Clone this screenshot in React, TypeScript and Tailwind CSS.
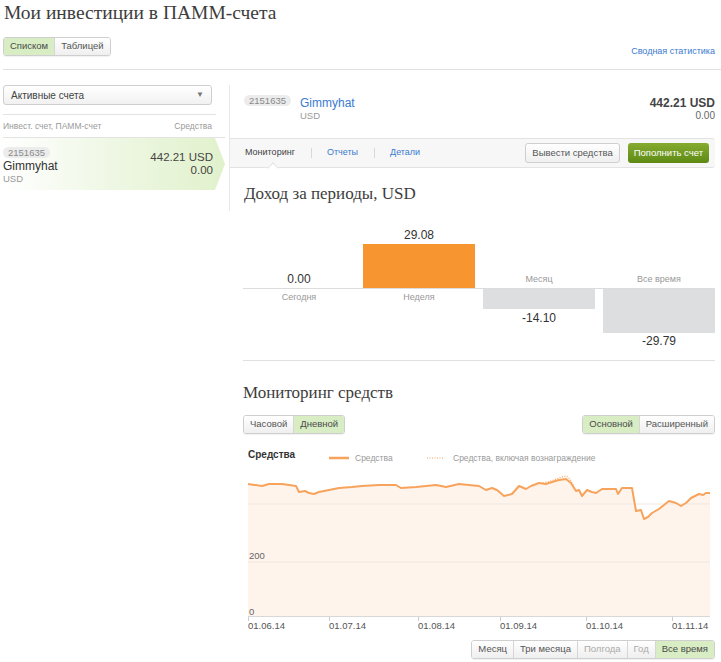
import React from "react";

const sans = { fontFamily: '"Liberation Sans", Arial, sans-serif' };
const serif = { fontFamily: '"Liberation Serif", "Times New Roman", serif' };

const line: [number, number][] = [
  [5, 43], [19, 45], [26, 43], [39, 43], [46, 44], [53, 45], [56, 51], [62, 50],
  [66, 52], [71, 53], [76, 51], [86, 49], [96, 47], [109, 46], [119, 45], [136, 44],
  [153, 44], [158, 47], [173, 46], [193, 44], [203, 46], [216, 43], [236, 45],
  [243, 49], [249, 47], [254, 49], [261, 55], [269, 53], [276, 45], [283, 48],
  [288, 45], [296, 42], [303, 43], [309, 41], [316, 39], [323, 38], [328, 42],
  [333, 50], [336, 49], [339, 55], [344, 49], [349, 51], [353, 52], [359, 48],
  [373, 48], [375, 53], [379, 47], [389, 47], [393, 70], [398, 69], [401, 78],
  [405, 76], [409, 72], [416, 68], [426, 60], [433, 62], [438, 65], [443, 62],
  [448, 57], [456, 53], [460, 54], [463, 52], [467, 52],
];

const dotted: [number, number][] = [
  [300, 42], [304, 41], [311, 39], [318, 36], [323, 35], [327, 38], [330, 44],
];

const xLabels = [
  { x: 5, t: "01.06.14" },
  { x: 86, t: "01.07.14" },
  { x: 175, t: "01.08.14" },
  { x: 257, t: "01.09.14" },
  { x: 343, t: "01.10.14" },
  { x: 429, t: "01.11.14" },
];

function Seg({
  items,
}: {
  items: { label: string; active?: boolean; disabled?: boolean }[];
}) {
  return (
    <div className="inline-flex rounded-[3px] border border-[#cfcfcf] shadow-[0_1px_1px_rgba(0,0,0,0.06)] overflow-hidden">
      {items.map((it, i) => (
        <div
          key={it.label}
          className={`px-[6px] h-[17px] flex items-center text-[9.5px] ${
            i > 0 ? "border-l border-[#d6d6d6]" : ""
          } ${
            it.active
              ? "bg-[#d8edc4] text-[#4a4a4a]"
              : "bg-gradient-to-b from-white to-[#efefef] " +
                (it.disabled ? "text-[#aaa]" : "text-[#555]")
          }`}
        >
          {it.label}
        </div>
      ))}
    </div>
  );
}

function Badge({ children }: { children: React.ReactNode }) {
  return (
    <div className="inline-block rounded-full bg-[#ececec] px-[5px] text-[9.5px] leading-[11px] text-[#8a8a8a]">
      {children}
    </div>
  );
}

export default function App() {
  const pts = line.map((p) => p.join(",")).join(" ");
  const area = `5,175 ${pts} 467,175`;

  return (
    <div className="w-[721px] h-[662px] bg-white text-[#333] overflow-hidden" style={sans}>
      <div className="pl-[3px] pr-[6px]">
        <h1 className="text-[19.5px] leading-[24px] pt-[1px] pl-[1px] text-[#3d3d3d]" style={serif}>
          Мои инвестиции в ПАММ-счета
        </h1>

        <div className="mt-[12px] flex items-end justify-between">
          <Seg items={[{ label: "Списком", active: true }, { label: "Таблицей" }]} />
          <a className="text-[9px] text-[#3b7ad0] mb-[-2px]">Сводная статистика</a>
        </div>

        <div className="mt-[13px] h-px bg-[#e2e2e2] mr-[-6px]" />

        <div className="mt-[15px] flex">
          {/* sidebar */}
          <div className="w-[226px] shrink-0">
            <div className="w-[213px] border-b border-[#e3e3e3] pb-[9px]">
              <div className="h-[20px] w-[209px] rounded-[3px] border border-[#cfcfcf] bg-gradient-to-b from-white to-[#f1f1f1] flex items-center justify-between px-[7px] text-[10px] text-[#444]">
                <span>Активные счета</span>
                <span className="text-[8px] text-[#777]">▼</span>
              </div>
            </div>
            <div className="w-[222px] h-[23px] flex items-center justify-between border-b border-[#e3e3e3] pr-[13px] text-[8.5px] text-[#999]">
              <span>Инвест. счет, ПАММ-счет</span>
              <span>Средства</span>
            </div>
            <div
              className="w-[222px] h-[52px] bg-gradient-to-r from-white via-[#eef7e3] to-[#e1f1cc] flex justify-between pr-[12px]"
              style={{
                clipPath:
                  "polygon(0 0, calc(100% - 10px) 0, 100% 50%, calc(100% - 10px) 100%, 0 100%)",
              }}
            >
              <div className="pt-[7px] leading-[11px]">
                <Badge>2151635</Badge>
                <div className="text-[12px] leading-[14px] text-[#333] mt-[1px]">Gimmyhat</div>
                <div className="text-[9.5px] leading-[11px] text-[#999]">USD</div>
              </div>
              <div className="pt-[13px] text-right text-[11.5px] leading-[13px] text-[#444]">
                <div>442.21 USD</div>
                <div>0.00</div>
              </div>
            </div>
          </div>

          {/* main panel */}
          <div className="flex-1">
            <div className="border-l border-[#e8e8e8]">
              <div className="h-[53px] pl-[14px] pt-[10px] flex justify-between">
                <div className="flex items-start gap-[9px] leading-[11px]">
                  <Badge>2151635</Badge>
                  <div>
                    <div className="text-[12px] leading-[14px] text-[#3b7ad0] mt-[1px]">Gimmyhat</div>
                    <div className="text-[9.5px] leading-[11px] text-[#999]">USD</div>
                  </div>
                </div>
                <div className="text-right pt-[1px]">
                  <div className="text-[12px] leading-[14px] font-bold text-[#444]">442.21 USD</div>
                  <div className="text-[10px] leading-[11px] text-[#666]">0.00</div>
                </div>
              </div>

              <div className="relative h-[30px] border-y border-[#e3e3e3] bg-[#f7f7f7] rounded-r-[3px] flex items-center justify-between pl-[15px] pr-[6px]">
                <div className="flex items-center text-[9px]">
                  <span className="text-[#444]">Мониторинг</span>
                  <span className="ml-[16px] mr-[15px] h-[10px] w-px bg-[#d8d8d8]" />
                  <span className="text-[#3b7ad0]">Отчеты</span>
                  <span className="ml-[16px] mr-[15px] h-[10px] w-px bg-[#d8d8d8]" />
                  <span className="text-[#3b7ad0]">Детали</span>
                </div>
                <div className="flex items-center gap-[8px]">
                  <div className="h-[20px] px-[6px] flex items-center rounded-[3px] border border-[#cfcfcf] bg-gradient-to-b from-white to-[#efefef] text-[9.5px] text-[#555]">
                    Вывести средства
                  </div>
                  <div className="h-[20px] px-[6px] flex items-center rounded-[3px] bg-gradient-to-b from-[#86ab2f] to-[#5d8a14] text-[9.5px] text-white">
                    Пополнить счет
                  </div>
                </div>
                <div className="absolute left-[39px] bottom-[-5px] w-[8px] h-[8px] rotate-45 bg-white border-l border-t border-[#e3e3e3]" />
              </div>

              <h2 className="pl-[14px] pt-[16px] pb-[7px] text-[17px] leading-[20px] text-[#3d3d3d]" style={serif}>
                Доход за периоды, USD
              </h2>
            </div>

            <div className="pl-[14px]">
              {/* bars */}
              <div className="mt-[5px] grid grid-cols-4 gap-x-[8px] h-[73px] items-end border-b border-[#dcdcdc] text-center">
                <div className="text-[12px] leading-[14px] mb-[2px]">0.00</div>
                <div>
                  <div className="text-[12px] leading-[14px] mb-[2px]">29.08</div>
                  <div className="h-[44px] bg-[#f79530]" />
                </div>
                <div className="text-[9px] leading-[12px] text-[#999] mb-[3px]">Месяц</div>
                <div className="text-[9px] leading-[12px] text-[#999] mb-[3px]">Все время</div>
              </div>
              <div className="grid grid-cols-4 gap-x-[8px] h-[72px] items-start border-b border-[#e0e0e0] text-center">
                <div className="text-[9px] leading-[12px] text-[#999] mt-[2px]">Сегодня</div>
                <div className="text-[9px] leading-[12px] text-[#999] mt-[2px]">Неделя</div>
                <div>
                  <div className="h-[20px] bg-[#dcdee0]" />
                  <div className="text-[12px] leading-[14px] mt-[2px]">-14.10</div>
                </div>
                <div>
                  <div className="h-[44px] bg-[#dcdee0]" />
                  <div className="text-[12px] leading-[14px] mt-[1px]">-29.79</div>
                </div>
              </div>

              <h2 className="mt-[20px] text-[17px] leading-[24px] text-[#3d3d3d]" style={serif}>
                Мониторинг средств
              </h2>

              <div className="mt-[10px] flex justify-between">
                <Seg items={[{ label: "Часовой" }, { label: "Дневной", active: true }]} />
                <Seg items={[{ label: "Основной", active: true }, { label: "Расширенный" }]} />
              </div>

              <svg width="471" height="192" viewBox="0 0 471 192" className="mt-[7px] block">
                <text x="5" y="17" fontSize="10" fontWeight="bold" fill="#333" style={sans}>
                  Средства
                </text>
                <line x1="86" y1="17" x2="106" y2="17" stroke="#f7a35c" strokeWidth="2.5" />
                <text x="112" y="20" fontSize="8.5" fill="#999" style={sans}>
                  Средства
                </text>
                <line x1="184" y1="17" x2="201" y2="17" stroke="#f7a35c" strokeWidth="1.2" strokeDasharray="1 1.5" />
                <text x="210" y="20" fontSize="8.5" fill="#999" style={sans}>
                  Средства, включая вознаграждение
                </text>

                <polygon points={area} fill="#fff4ec" />
                <line x1="5" y1="63" x2="467" y2="63" stroke="#efe7e2" strokeWidth="1" />
                <line x1="5" y1="121" x2="467" y2="121" stroke="#efe7e2" strokeWidth="1" />
                <line x1="5" y1="175.5" x2="467" y2="175.5" stroke="#d8d8d8" strokeWidth="1" />
                <polyline points={dotted.map((p) => p.join(",")).join(" ")} fill="none" stroke="#f7a35c" strokeWidth="1.2" strokeDasharray="1 1.5" />
                <polyline points={pts} fill="none" stroke="#f7a35c" strokeWidth="2" strokeLinejoin="round" />

                <text x="6" y="118" fontSize="9.5" fill="#666" style={sans}>
                  200
                </text>
                <text x="6" y="174" fontSize="9.5" fill="#666" style={sans}>
                  0
                </text>
                {xLabels.map((l) => (
                  <g key={l.t}>
                    <line x1={l.x + 0.5} y1="176" x2={l.x + 0.5} y2="180" stroke="#ccc" />
                    <text x={l.x} y="188" fontSize="9.5" fill="#555" style={sans}>
                      {l.t}
                    </text>
                  </g>
                ))}
              </svg>

              <div className="mt-[7px] flex justify-end">
                <Seg
                  items={[
                    { label: "Месяц" },
                    { label: "Три месяца" },
                    { label: "Полгода", disabled: true },
                    { label: "Год", disabled: true },
                    { label: "Все время", active: true },
                  ]}
                />
              </div>
            </div>
          </div>
        </div>
      </div>
    </div>
  );
}
